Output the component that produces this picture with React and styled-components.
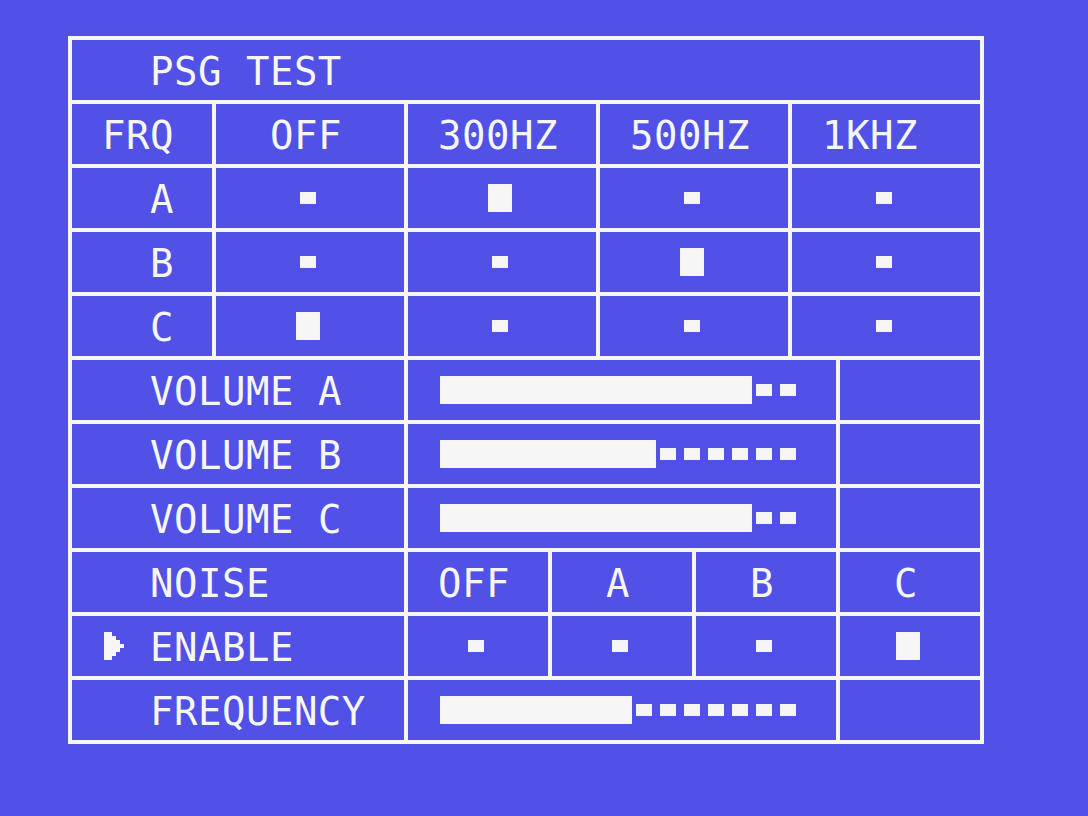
import React from 'react';
import styled, { createGlobalStyle } from 'styled-components';

const BLUE = '#5151e8';
const INK = '#f6f6f6';
const CHAR = 24;
const STEPS = 15;

const GlobalStyle = createGlobalStyle`
  html, body {
    margin: 0;
    padding: 0;
    background: ${BLUE};
  }
  body {
    min-height: 100vh;
    font-family: 'DejaVu Sans Mono', 'Liberation Mono', monospace;
  }
`;

const Screen = styled.main`
  padding: 36px 0 0 68px;
`;

const Table = styled.div`
  width: 916px;
  box-sizing: border-box;
  padding: 4px;
  background: ${INK};
  display: flex;
  flex-direction: column;
  gap: 4px;
`;

const Row = styled.div`
  display: grid;
  grid-template-columns: ${(p) => p.$cols};
  gap: 4px;
`;

const Cell = styled.div`
  height: 60px;
  background: ${BLUE};
  color: ${INK};
  display: flex;
  align-items: center;
  padding-left: ${(p) => 32 + (p.$indent || 0) * CHAR}px;
`;

const Text = styled.span`
  display: block;
  margin: 2px 0 0 -2px;
  font-size: 39px;
  line-height: 39px;
  letter-spacing: 0.5px;
  white-space: pre;
`;

// one character cell of the screen: a full block or the small "off" dot
const Slot = styled.span`
  width: ${CHAR}px;
  height: 28px;
  flex: none;
  display: block;

  &::after {
    content: '';
    display: block;
    background: ${INK};
    width: ${(p) => (p.$full ? '24px' : '16px')};
    height: ${(p) => (p.$full ? '28px' : '12px')};
    margin: ${(p) => (p.$full ? '0' : '8px 0 0 4px')};
  }
`;

const Glyphs = styled.div`
  display: flex;
  align-items: center;
`;

const Pointer = styled.svg`
  display: block;
  width: 20px;
  height: 28px;
  margin-right: 28px;
`;

const Arrow = () => (
  <Pointer viewBox="0 0 20 28" shapeRendering="crispEdges">
    <polygon
      fill={INK}
      points="0,0 8,0 8,4 12,4 12,8 16,8 16,12 20,12 20,16 16,16 16,20 12,20 12,24 8,24 8,28 0,28"
    />
  </Pointer>
);

const Bar = ({ value }) => (
  <Glyphs>
    {Array.from({ length: STEPS }, (_, i) => (
      <Slot key={i} $full={i < value} />
    ))}
  </Glyphs>
);

const FREQ_COLS = '140px repeat(4, 188px)';
const VOL_COLS = '332px 428px 140px';
const NOISE_COLS = '332px repeat(4, 140px)';

const freqs = ['OFF', '300HZ', '500HZ', '1KHZ'];
const channels = [
  { name: 'A', freq: 1 },
  { name: 'B', freq: 2 },
  { name: 'C', freq: 0 },
];
const volumes = [
  { name: 'A', value: 13 },
  { name: 'B', value: 9 },
  { name: 'C', value: 13 },
];
const noise = ['OFF', 'A', 'B', 'C'];
const noiseOn = 3;

export default function App() {
  return (
    <>
      <GlobalStyle />
      <Screen>
        <Table>
          <Row $cols="1fr">
            <Cell $indent={2}>
              <Text>PSG TEST</Text>
            </Cell>
          </Row>

          <Row $cols={FREQ_COLS}>
            <Cell>
              <Text>FRQ</Text>
            </Cell>
            {freqs.map((f, i) => (
              <Cell key={f} $indent={i === 0 ? 1 : 0}>
                <Text>{f}</Text>
              </Cell>
            ))}
          </Row>

          {channels.map((ch) => (
            <Row key={ch.name} $cols={FREQ_COLS}>
              <Cell $indent={2}>
                <Text>{ch.name}</Text>
              </Cell>
              {freqs.map((f, i) => (
                <Cell key={f} $indent={2}>
                  <Slot $full={i === ch.freq} />
                </Cell>
              ))}
            </Row>
          ))}

          {volumes.map((v) => (
            <Row key={v.name} $cols={VOL_COLS}>
              <Cell $indent={2}>
                <Text>VOLUME {v.name}</Text>
              </Cell>
              <Cell>
                <Bar value={v.value} />
              </Cell>
              <Cell />
            </Row>
          ))}

          <Row $cols={NOISE_COLS}>
            <Cell $indent={2}>
              <Text>NOISE</Text>
            </Cell>
            {noise.map((n, i) => (
              <Cell key={n} $indent={i === 0 ? 0 : 1}>
                <Text>{n}</Text>
              </Cell>
            ))}
          </Row>

          <Row $cols={NOISE_COLS}>
            <Cell>
              <Arrow />
              <Text>ENABLE</Text>
            </Cell>
            {noise.map((n, i) => (
              <Cell key={n} $indent={1}>
                <Slot $full={i === noiseOn} />
              </Cell>
            ))}
          </Row>

          <Row $cols={VOL_COLS}>
            <Cell $indent={2}>
              <Text>FREQUENCY</Text>
            </Cell>
            <Cell>
              <Bar value={8} />
            </Cell>
            <Cell />
          </Row>
        </Table>
      </Screen>
    </>
  );
}
